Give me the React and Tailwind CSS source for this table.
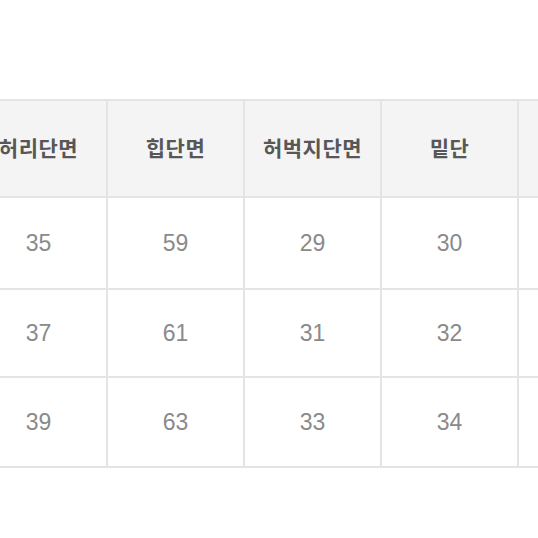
import React from "react"

// Size chart (단위 cm) — cropped view of a wider table; last column runs off the edge
const headers = ["허리단면", "힙단면", "허벅지단면", "밑단", ""]
const rows = [
  { h: "h-[92px]", cells: ["35", "59", "29", "30", ""] },
  { h: "h-[88px]", cells: ["37", "61", "31", "32", ""] },
  { h: "h-[90px]", cells: ["39", "63", "33", "34", ""] }
]

export default function App() {
  return (
    <main
      className="w-[538px] h-[538px] overflow-hidden bg-white pt-[99px]"
      style={{ fontFamily: '"Liberation Sans", "Noto Sans CJK KR", sans-serif' }}
    >
      <table className="table-fixed border-collapse -ml-[31px] w-[687px]">
        <thead>
          <tr className="h-[97px] bg-[#f4f4f4]">
            {headers.map((t, i) => (
              <th
                key={i}
                className="w-[137px] border-2 border-[#e4e4e4] text-[21px] font-bold tracking-[0.5px] text-[#575757]"
              >
                {t}
              </th>
            ))}
          </tr>
        </thead>
        <tbody>
          {rows.map((r, i) => (
            <tr key={i} className={r.h}>
              {r.cells.map((c, j) => (
                <td
                  key={j}
                  className="border-2 border-[#e4e4e4] text-center text-[23px] text-[#8a8a8a]"
                >
                  {c}
                </td>
              ))}
            </tr>
          ))}
        </tbody>
      </table>
    </main>
  )
}
